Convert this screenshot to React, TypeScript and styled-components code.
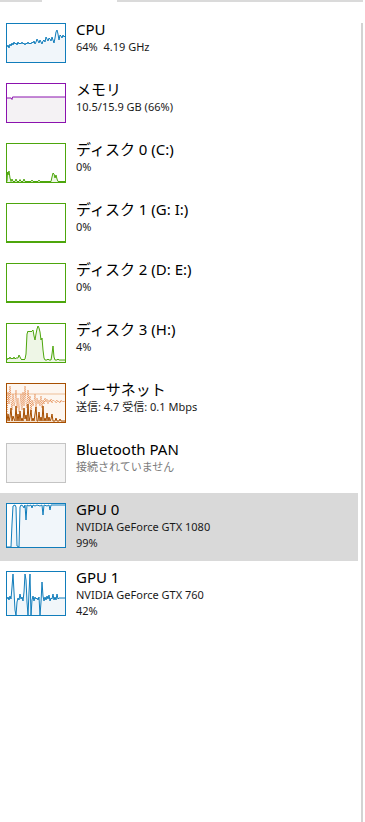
import React from "react";
import styled, { createGlobalStyle } from "styled-components";

const GlobalStyle = createGlobalStyle`
  html, body {
    margin: 0;
    padding: 0;
    background: #ffffff;
  }
  body {
    font-family: "Segoe UI", "Noto Sans", "Noto Sans CJK JP", sans-serif;
    color: #000000;
  }
`;

const Page = styled.div`
  width: 365px;
  height: 822px;
  display: flex;
  flex-direction: column;
  overflow: hidden;
  background: #ffffff;
`;

const TabEdge = styled.div`
  display: flex;
  height: 2px;
  flex-shrink: 0;
`;

const EdgePart = styled.div<{ $w: number; $on?: boolean }>`
  width: ${(p) => p.$w}px;
  background: ${(p) => (p.$on ? "#dadada" : "transparent")};
`;

const Body = styled.div`
  flex: 1;
  display: flex;
`;

const List = styled.div`
  width: 358px;
  padding-top: 11px;
  display: flex;
  flex-direction: column;
`;

const Scroll = styled.div`
  width: 2px;
  margin: 21px 0 0 3px;
  background: #d3d3d3;
`;

const Row = styled.div<{ $selected?: boolean }>`
  display: flex;
  align-items: flex-start;
  gap: 10px;
  padding: 10px 0 10px 6px;
  background: ${(p) => (p.$selected ? "#d9d9d9" : "transparent")};
`;

const Thumb = styled.div<{ $border: string; $bg: string; $h: number }>`
  width: 60px;
  height: ${(p) => p.$h}px;
  flex-shrink: 0;
  box-sizing: border-box;
  border: 1px solid ${(p) => p.$border};
  background: ${(p) => p.$bg};
  svg {
    display: block;
    width: 100%;
    height: 100%;
  }
`;

const Info = styled.div`
  display: flex;
  flex-direction: column;
  margin-top: -3px;
`;

const Title = styled.div`
  font-size: 15px;
  line-height: 19px;
  white-space: nowrap;
`;

const Sub = styled.div<{ $muted?: boolean }>`
  font-size: 11px;
  line-height: 16px;
  white-space: nowrap;
  color: ${(p) => (p.$muted ? "#7c7c7c" : "#1a1a1a")};
`;

type ChartProps = {
  h: number;
  pts: string;
  line: string;
  fill: string;
  children?: React.ReactNode;
};

const Chart = ({ h, pts, line, fill, children }: ChartProps) => (
  <svg viewBox={`0 0 58 ${h}`} preserveAspectRatio="none">
    <polygon points={`${pts} 58,${h} 0,${h}`} fill={fill} stroke="none" />
    {children}
    <polyline
      points={pts}
      fill="none"
      stroke={line}
      strokeWidth={1}
      strokeLinejoin="round"
      vectorEffect="non-scaling-stroke"
    />
  </svg>
);

const BLUE = "#117dbb";
const BLUE_FILL = "#f1f6fa";
const GREEN = "#4da60c";
const GREEN_FILL = "#eef6e6";

const cpuPts =
  "0,23 1,21 2,24 3,20 4,22 5,19 6,21 7,18 8,20 9,19 10,21 11,18 12,20 13,19 14,20 15,18 16,20 17,19 18,21 19,19 20,20 21,18 22,20 23,19 24,20 25,18 26,19 27,17 28,20 29,18 30,15 31,17 32,19 33,16 34,18 35,20 36,17 37,16 38,18 39,13 40,15 41,17 42,14 43,15 44,17 45,13 46,16 47,19 48,14 49,8 50,6 51,10 52,16 53,11 54,12 55,14 56,11 57,13 58,12";

const memPts = "0,14 4,14 5,15.5 5.5,13 58,13";

const disk0Pts =
  "0,37.5 0.5,28 1,31 2,27 3,34 4,37.5 5,35 6,37.5 8,37.5 9,35 10,37.5 12,37.5 13,35.5 14,37.5 16,37.5 17,35 18,37.5 24,37.5 25,36 26,37.5 31,37.5 32,36 33,37.5 44,37.5 45,33 46,29 47,30 48,34 49,31 50,35 51,37.5 58,37.5";

const flatPts = "0,37.5 58,37.5";

const disk3Pts =
  "0,36 1,34 2,35 3,33 4,35 5,34 6,35 7,33 8,35 9,34 10,34 11,34 12,31 13,33 14,35 15,36 16,35 17,36 18,35 19,30 20,10 21,7 22,8 23,7 24,8 25,7 26,6 27,12 28,16 29,10 30,5 31,2 32,4 33,8 34,16 35,14 36,26 37,34 38,36 40,36 41,35 42,36 44,36 45,30 46,22 47,33 48,36 50,36 51,35 52,36 58,36";

const ethRecv =
  "0,37 1,30 2,37 3,33 4,24 5,37 6,32 7,35 8,37 9,22 10,37 11,30 12,37 13,27 14,37 15,34 16,37 17,24 18,35 19,31 20,37 21,20 22,37 23,33 24,26 25,37 26,34 27,37 28,30 29,23 30,37 31,37 32,28 33,37 34,33 35,37 36,22 37,37 38,34 39,37 40,29 41,37 42,33 43,37 44,35 45,30 46,37 48,37 49,34 50,37 52,37 53,35 54,37 58,37";

const ethSend =
  "0,30 1,8 2,20 3,2 4,16 5,26 6,10 7,22 8,18 9,6 10,24 11,14 12,28 13,20 14,10 15,26 16,8 17,22 18,2 19,18 20,24 21,6 22,20 23,12 24,28 25,16 26,22 27,18 28,10 29,24 30,14 31,20 32,16 33,22 34,12 35,24 36,16 37,20 38,14 39,18 40,15 41,20 42,16 43,18 44,15 45,19 46,16 47,17 48,17 49,19 50,16 51,18 52,17 53,19 54,16 55,18 56,17 57,18 58,17";

const gpu0Pts =
  "0,43 4,43 5,20 6,2 8,1 9,3 10,42 12,43 13,3 14,1 16,2 17,4 18,1 19,16 20,1 22,2 24,1 25,4 26,1 28,2 30,1 33,2 35,1 36,11 37,1 40,2 42,1 43,6 44,1 58,1";

const gpu1Pts =
  "0,27 1,25 2,28 3,24 4,27 5,15 6,2 7,20 8,38 9,43.5 10,30 11,26 12,28 13,22 14,27 15,25 16,29 17,20 18,2 19,8 20,30 21,43.5 22,20 23,2 24,43.5 25,28 26,24 27,29 28,25 29,27 30,26 31,28 32,25 33,43.5 34,30 35,10 36,24 37,29 38,25 39,28 40,24 41,27 42,23 43,29 44,26 45,27 46,22 47,28 48,25 49,28 50,22 51,27 52,26 58,26";

export default function App() {
  return (
    <Page>
      <GlobalStyle />
      <TabEdge>
        <EdgePart $w={42} $on />
        <EdgePart $w={75} />
        <EdgePart $w={246} $on />
      </TabEdge>
      <Body>
        <List>
          <Row>
            <Thumb $border={BLUE} $bg="#ffffff" $h={40}>
              <Chart h={38} pts={cpuPts} line={BLUE} fill={BLUE_FILL} />
            </Thumb>
            <Info>
              <Title>CPU</Title>
              <Sub>64%&nbsp;&nbsp;4.19 GHz</Sub>
            </Info>
          </Row>
          <Row>
            <Thumb $border="#8b12ae" $bg="#ffffff" $h={40}>
              <Chart h={38} pts={memPts} line="#8b12ae" fill="#f4f2f4" />
            </Thumb>
            <Info>
              <Title>メモリ</Title>
              <Sub>10.5/15.9 GB (66%)</Sub>
            </Info>
          </Row>
          <Row>
            <Thumb $border={GREEN} $bg="#ffffff" $h={40}>
              <Chart h={38} pts={disk0Pts} line={GREEN} fill={GREEN_FILL} />
            </Thumb>
            <Info>
              <Title>ディスク 0 (C:)</Title>
              <Sub>0%</Sub>
            </Info>
          </Row>
          <Row>
            <Thumb $border={GREEN} $bg="#ffffff" $h={40}>
              <Chart h={38} pts={flatPts} line={GREEN} fill={GREEN_FILL} />
            </Thumb>
            <Info>
              <Title>ディスク 1 (G: I:)</Title>
              <Sub>0%</Sub>
            </Info>
          </Row>
          <Row>
            <Thumb $border={GREEN} $bg="#ffffff" $h={40}>
              <Chart h={38} pts={flatPts} line={GREEN} fill={GREEN_FILL} />
            </Thumb>
            <Info>
              <Title>ディスク 2 (D: E:)</Title>
              <Sub>0%</Sub>
            </Info>
          </Row>
          <Row>
            <Thumb $border={GREEN} $bg="#ffffff" $h={40}>
              <Chart h={38} pts={disk3Pts} line={GREEN} fill={GREEN_FILL} />
            </Thumb>
            <Info>
              <Title>ディスク 3 (H:)</Title>
              <Sub>4%</Sub>
            </Info>
          </Row>
          <Row>
            <Thumb $border="#a74f01" $bg="#fdf6f0" $h={40}>
              <Chart h={38} pts={ethRecv} line="#a74f01" fill="#f6e2cf">
                <line
                  x1={0}
                  y1={10}
                  x2={58}
                  y2={10}
                  stroke="#eebf98"
                  strokeWidth={1}
                  vectorEffect="non-scaling-stroke"
                />
                <polyline
                  points={ethSend}
                  fill="none"
                  stroke="#e58a4e"
                  strokeWidth={1}
                  strokeDasharray="1 1"
                  vectorEffect="non-scaling-stroke"
                />
              </Chart>
            </Thumb>
            <Info>
              <Title>イーサネット</Title>
              <Sub>送信: 4.7 受信: 0.1 Mbps</Sub>
            </Info>
          </Row>
          <Row>
            <Thumb $border="#c4c4c4" $bg="#f4f4f4" $h={40} />
            <Info>
              <Title>Bluetooth PAN</Title>
              <Sub $muted>接続されていません</Sub>
            </Info>
          </Row>
          <Row $selected>
            <Thumb $border={BLUE} $bg="#ffffff" $h={45}>
              <Chart h={43} pts={gpu0Pts} line={BLUE} fill={BLUE_FILL} />
            </Thumb>
            <Info>
              <Title>GPU 0</Title>
              <Sub>NVIDIA GeForce GTX 1080</Sub>
              <Sub>99%</Sub>
            </Info>
          </Row>
          <Row>
            <Thumb $border={BLUE} $bg="#ffffff" $h={45}>
              <Chart h={43} pts={gpu1Pts} line={BLUE} fill={BLUE_FILL} />
            </Thumb>
            <Info>
              <Title>GPU 1</Title>
              <Sub>NVIDIA GeForce GTX 760</Sub>
              <Sub>42%</Sub>
            </Info>
          </Row>
        </List>
        <Scroll />
      </Body>
    </Page>
  );
}
